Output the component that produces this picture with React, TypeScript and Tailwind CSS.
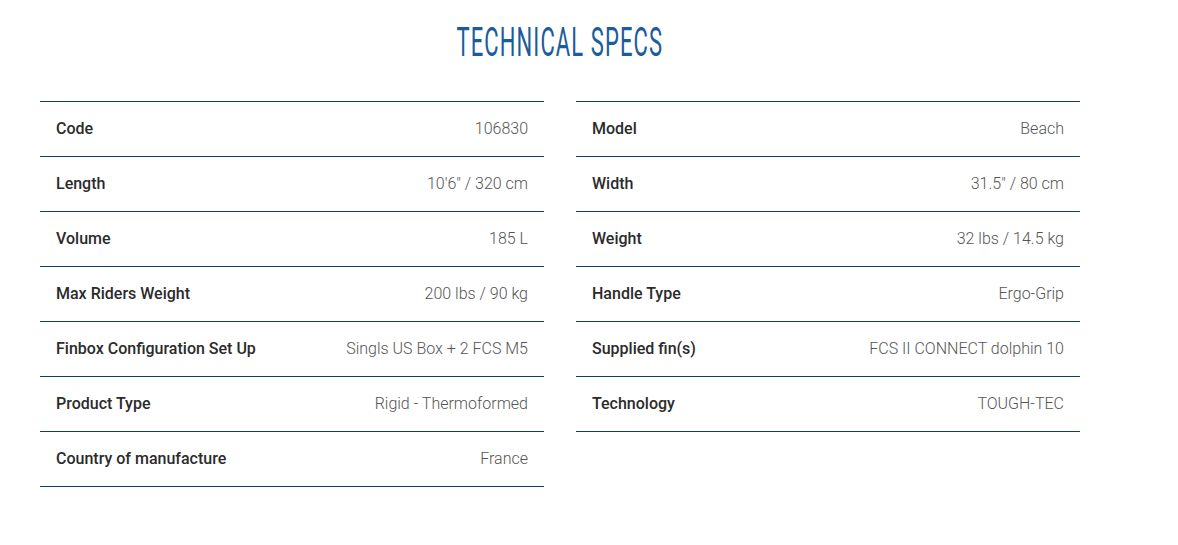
import React from "react";

type Spec = { label: string; value: string };

const LEFT_SPECS: Spec[] = [
  { label: "Code", value: "106830" },
  { label: "Length", value: "10'6\" / 320 cm" },
  { label: "Volume", value: "185 L" },
  { label: "Max Riders Weight", value: "200 lbs / 90 kg" },
  { label: "Finbox Configuration Set Up", value: "Singls US Box + 2 FCS M5" },
  { label: "Product Type", value: "Rigid - Thermoformed" },
  { label: "Country of manufacture", value: "France" },
];

const RIGHT_SPECS: Spec[] = [
  { label: "Model", value: "Beach" },
  { label: "Width", value: "31.5\" / 80 cm" },
  { label: "Weight", value: "32 lbs / 14.5 kg" },
  { label: "Handle Type", value: "Ergo-Grip" },
  { label: "Supplied fin(s)", value: "FCS II CONNECT dolphin 10" },
  { label: "Technology", value: "TOUGH-TEC" },
];

function SpecTable({ specs }: { specs: Spec[] }) {
  return (
    <div className="border-t border-[#0d3f6e]">
      {specs.map((spec) => (
        <div
          key={spec.label}
          className="flex h-[55px] items-center justify-between border-b border-[#0d3f6e] px-4"
        >
          <span className="text-[16px] font-medium text-[#2b2b2b]">{spec.label}</span>
          <span className="text-[16px] font-light text-[#555]">{spec.value}</span>
        </div>
      ))}
    </div>
  );
}

export default function App() {
  return (
    <div className="min-h-[545px] bg-white font-['Roboto',sans-serif]">
      <div className="w-[1040px] ml-10">
        <div className="flex justify-center pt-5 h-[101px]">
          <h2 className="inline-block origin-center scale-x-[0.55] text-[40px] font-normal leading-[46px] tracking-[2px] text-[#1b5c9b]">
            TECHNICAL SPECS
          </h2>
        </div>
        <div className="grid grid-cols-2 gap-8">
          <SpecTable specs={LEFT_SPECS} />
          <SpecTable specs={RIGHT_SPECS} />
        </div>
      </div>
    </div>
  );
}
